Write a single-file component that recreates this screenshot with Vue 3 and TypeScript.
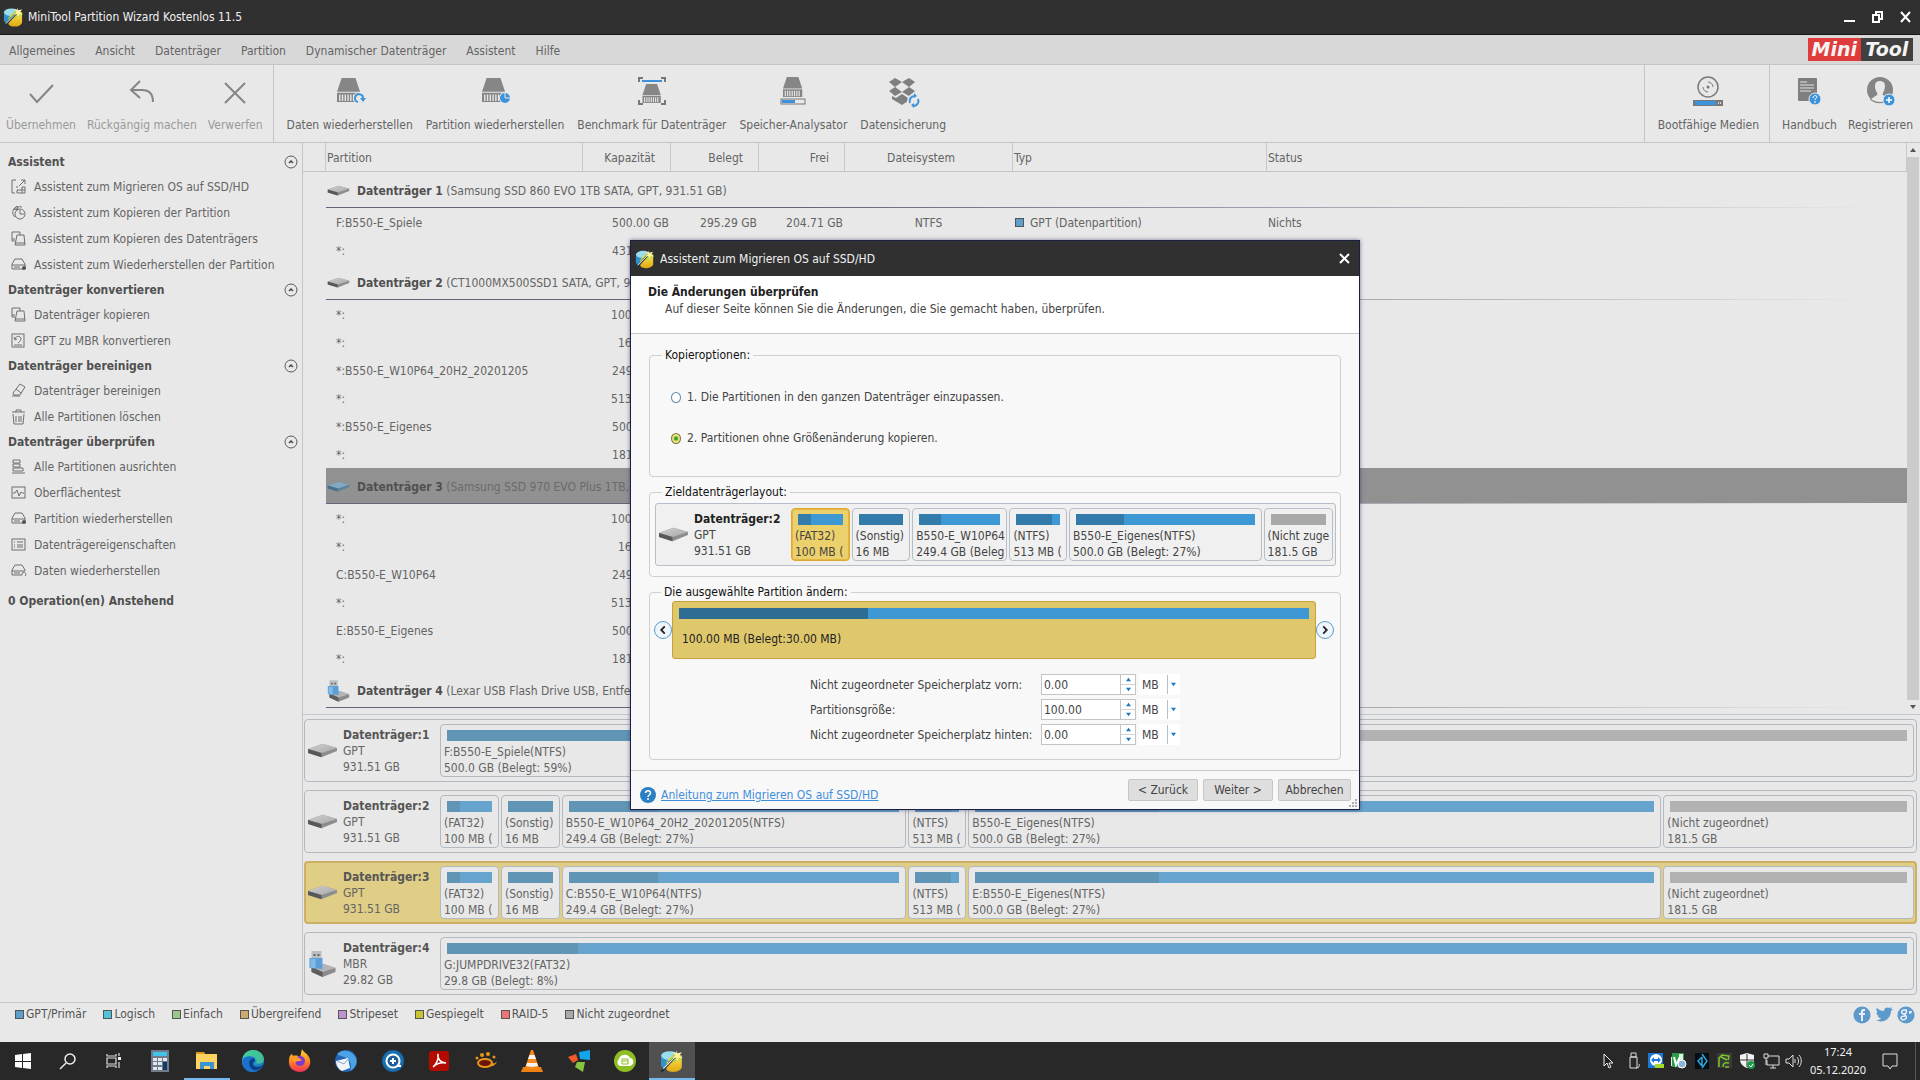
<script setup lang="ts">
import { ref } from 'vue'

interface ToolItem { label: string; icon: string; off?: boolean }
interface Part { name: string; info: string; size: number; used: number; free?: boolean; active?: boolean }
interface Disk { title: string; scheme: string; total: string; icon: string; selected?: boolean; parts: Part[] }
interface Row { name: string; cap: string; used?: string; free?: string; fs?: string; type?: string; status?: string }
interface Group { title: string; detail: string; icon: string; selected?: boolean; rows: Row[] }

const menus = ['Allgemeines', 'Ansicht', 'Datenträger', 'Partition', 'Dynamischer Datenträger', 'Assistent', 'Hilfe']

const pendingTools: ToolItem[] = [
  { label: 'Übernehmen', icon: 't-check', off: true },
  { label: 'Rückgängig machen', icon: 't-undo', off: true },
  { label: 'Verwerfen', icon: 't-cross', off: true },
]
const mainTools: ToolItem[] = [
  { label: 'Daten wiederherstellen', icon: 't-recover' },
  { label: 'Partition wiederherstellen', icon: 't-part' },
  { label: 'Benchmark für Datenträger', icon: 't-bench' },
  { label: 'Speicher-Analysator', icon: 't-space' },
  { label: 'Datensicherung', icon: 't-backup' },
]
const mediaTools: ToolItem[] = [{ label: 'Bootfähige Medien', icon: 't-media' }]
const helpTools: ToolItem[] = [
  { label: 'Handbuch', icon: 't-manual' },
  { label: 'Registrieren', icon: 't-user' },
]

const sections = [
  { title: 'Assistent', items: [
    { icon: 's-migrate', label: 'Assistent zum Migrieren OS auf SSD/HD' },
    { icon: 's-pie', label: 'Assistent zum Kopieren der Partition' },
    { icon: 's-copy', label: 'Assistent zum Kopieren des Datenträgers' },
    { icon: 's-drive', label: 'Assistent zum Wiederherstellen der Partition' },
  ] },
  { title: 'Datenträger konvertieren', items: [
    { icon: 's-copy', label: 'Datenträger kopieren' },
    { icon: 's-convert', label: 'GPT zu MBR konvertieren' },
  ] },
  { title: 'Datenträger bereinigen', items: [
    { icon: 's-erase', label: 'Datenträger bereinigen' },
    { icon: 's-trash', label: 'Alle Partitionen löschen' },
  ] },
  { title: 'Datenträger überprüfen', items: [
    { icon: 's-align', label: 'Alle Partitionen ausrichten' },
    { icon: 's-surface', label: 'Oberflächentest' },
    { icon: 's-drive', label: 'Partition wiederherstellen' },
    { icon: 's-list', label: 'Datenträgereigenschaften' },
    { icon: 's-drive2', label: 'Daten wiederherstellen' },
  ] },
]

const groups: Group[] = [
  { title: 'Datenträger 1', detail: '(Samsung SSD 860 EVO 1TB SATA, GPT, 931.51 GB)', icon: 'disk', rows: [
    { name: 'F:B550-E_Spiele', cap: '500.00 GB', used: '295.29 GB', free: '204.71 GB', fs: 'NTFS', type: 'GPT (Datenpartition)', status: 'Nichts' },
    { name: '*:', cap: '431.51 GB' },
  ] },
  { title: 'Datenträger 2', detail: '(CT1000MX500SSD1 SATA, GPT, 931.51 GB)', icon: 'disk', rows: [
    { name: '*:', cap: '100.00 MB' },
    { name: '*:', cap: '16.00 MB' },
    { name: '*:B550-E_W10P64_20H2_20201205', cap: '249.40 GB' },
    { name: '*:', cap: '513.00 MB' },
    { name: '*:B550-E_Eigenes', cap: '500.00 GB' },
    { name: '*:', cap: '181.50 GB' },
  ] },
  { title: 'Datenträger 3', detail: '(Samsung SSD 970 EVO Plus 1TB, GPT, 931.51 GB)', icon: 'disk-blue', selected: true, rows: [
    { name: '*:', cap: '100.00 MB' },
    { name: '*:', cap: '16.00 MB' },
    { name: 'C:B550-E_W10P64', cap: '249.40 GB' },
    { name: '*:', cap: '513.00 MB' },
    { name: 'E:B550-E_Eigenes', cap: '500.00 GB' },
    { name: '*:', cap: '181.50 GB' },
  ] },
  { title: 'Datenträger 4', detail: '(Lexar USB Flash Drive USB, Entfernbar)', icon: 'usb', rows: [] },
]

const layout = (os: string, data: string): Part[] => [
  { name: '(FAT32)', info: '100 MB (', size: 59, used: 30 },
  { name: '(Sonstig)', info: '16 MB', size: 59, used: 100 },
  { name: os, info: '249.4 GB (Belegt: 27%)', size: 345, used: 27 },
  { name: '(NTFS)', info: '513 MB (', size: 58, used: 82 },
  { name: data, info: '500.0 GB (Belegt: 27%)', size: 694, used: 27 },
  { name: '(Nicht zugeordnet)', info: '181.5 GB', size: 251, used: 0, free: true },
]

const disks: Disk[] = [
  { title: 'Datenträger:1', scheme: 'GPT', total: '931.51 GB', icon: 'disk', parts: [
    { name: 'F:B550-E_Spiele(NTFS)', info: '500.0 GB (Belegt: 59%)', size: 791, used: 59 },
    { name: '(Nicht zugeordnet)', info: '431.5 GB', size: 681, used: 0, free: true },
  ] },
  { title: 'Datenträger:2', scheme: 'GPT', total: '931.51 GB', icon: 'disk', parts: layout('B550-E_W10P64_20H2_20201205(NTFS)', 'B550-E_Eigenes(NTFS)') },
  { title: 'Datenträger:3', scheme: 'GPT', total: '931.51 GB', icon: 'disk', selected: true, parts: layout('C:B550-E_W10P64(NTFS)', 'E:B550-E_Eigenes(NTFS)') },
  { title: 'Datenträger:4', scheme: 'MBR', total: '29.82 GB', icon: 'usb', parts: [
    { name: 'G:JUMPDRIVE32(FAT32)', info: '29.8 GB (Belegt: 8%)', size: 1474, used: 9 },
  ] },
]

const targetParts: Part[] = [
  { name: '(FAT32)', info: '100 MB (', size: 59, used: 30, active: true },
  { name: '(Sonstig)', info: '16 MB', size: 59, used: 100 },
  { name: 'B550-E_W10P64', info: '249.4 GB (Beleg', size: 96, used: 27 },
  { name: '(NTFS)', info: '513 MB (', size: 58, used: 82 },
  { name: 'B550-E_Eigenes(NTFS)', info: '500.0 GB (Belegt: 27%)', size: 194, used: 27 },
  { name: '(Nicht zuge', info: '181.5 GB', size: 70, used: 0, free: true },
]

// Each part carries a one-pixel border on both sides that flex growth does not cover.
const grow = (p: Part) => ({ flexGrow: p.size - 2 })

const copyMode = ref('2')
const copyModes = [
  { value: '1', label: '1. Die Partitionen in den ganzen Datenträger einzupassen.' },
  { value: '2', label: '2. Partitionen ohne Größenänderung kopieren.' },
]
const sizes = ref([
  { id: 'before', label: 'Nicht zugeordneter Speicherplatz vorn:', value: '0.00' },
  { id: 'size', label: 'Partitionsgröße:', value: '100.00' },
  { id: 'after', label: 'Nicht zugeordneter Speicherplatz hinten:', value: '0.00' },
])

const legend = [
  { label: 'GPT/Primär', color: '#5f9fcc' },
  { label: 'Logisch', color: '#4fc3dc' },
  { label: 'Einfach', color: '#9cc690' },
  { label: 'Übergreifend', color: '#cda96f' },
  { label: 'Stripeset', color: '#bd93d4' },
  { label: 'Gespiegelt', color: '#c6c52f' },
  { label: 'RAID-5', color: '#ea7575' },
  { label: 'Nicht zugeordnet', color: '#a9a9a9' },
]

const apps = [
  { id: 'a-calc', name: 'Rechner' },
  { id: 'a-folder', name: 'Explorer', open: true },
  { id: 'a-edge', name: 'Edge' },
  { id: 'a-firefox', name: 'Firefox' },
  { id: 'a-bird', name: 'Thunderbird' },
  { id: 'a-zoom', name: 'Suche' },
  { id: 'a-pdf', name: 'Acrobat' },
  { id: 'a-paw', name: 'IrfanView' },
  { id: 'a-vlc', name: 'VLC' },
  { id: 'a-wind', name: 'Cleaner' },
  { id: 'a-green', name: 'Download' },
  { id: 'wizard', name: 'Partition Wizard', open: true, active: true },
]
const tray = ['y-usb', 'y-tv', 'y-vm', 'y-diamond', 'y-green', 'y-shield', 'y-net', 'y-vol']
</script>

<template>
  <div class="desktop">
    <svg class="defs" aria-hidden="true">
      <defs>
        <linearGradient id="gTop" x1="0" y1="0" x2="1" y2="1"><stop offset="0" stop-color="#cfcfcf" /><stop offset="1" stop-color="#a9a9a9" /></linearGradient>
        <linearGradient id="gEdge" x1="0" y1="0" x2="1" y2="1"><stop offset="0" stop-color="#38d0c0" /><stop offset="1" stop-color="#1265c8" /></linearGradient>
        <linearGradient id="gFox" x1="0" y1="0" x2="0" y2="1"><stop offset="0" stop-color="#ffd93b" /><stop offset=".5" stop-color="#ff8a1e" /><stop offset="1" stop-color="#f0305a" /></linearGradient>
        <linearGradient id="gGold" x1="0" y1="0" x2="0" y2="1"><stop offset="0" stop-color="#f6e14c" /><stop offset="1" stop-color="#e0a812" /></linearGradient>
        <radialGradient id="gBlue"><stop offset="0" stop-color="#3aa0dc" /><stop offset="1" stop-color="#1464a4" /></radialGradient>
      </defs>
      <symbol id="wizard" viewBox="0 0 22 22">
        <path d="M1 7v7c0 3 3 4.500 7 4.500L11 9z" fill="#2f93c8" /><ellipse cx="9" cy="6" rx="8" ry="4" fill="#9adcf2" />
        <path d="M6 11c4 3 10 0 14-4v10c-2 5-11 5-14 2z" fill="url(#gGold)" /><path d="M7 10l5-5 8 1v3c-4 3-9 4-13 2z" fill="#c5d94a" />
        <path d="M1 21L15 6" stroke="#20303a" stroke-width="2" /><path d="M3 18L15 6" stroke="#f0f0f0" stroke-width="1" />
        <path d="M15 1l1 3 4-1-2 3 3 2-4 0-1 3-1-3-4 0 3-2-2-3 3 1z" fill="#fff2a0" />
      </symbol>
      <symbol id="disk" viewBox="0 0 30 14">
        <path d="M1 5L15 0l14 4v3L14 13 1 9z" fill="#8d8d8d" /><path d="M1 5L15 0l14 4-15 5z" fill="url(#gTop)" /><path d="M1 5l13 4v4L1 9z" fill="#585858" />
      </symbol>
      <symbol id="disk-blue" viewBox="0 0 30 14">
        <path d="M1 5L15 0l14 4v3L14 13 1 9z" fill="#5d8199" /><path d="M1 5L15 0l14 4-15 5z" fill="#83a8c4" /><path d="M1 5l13 4v4L1 9z" fill="#47708c" />
      </symbol>
      <symbol id="usb" viewBox="0 0 28 26">
        <path d="M3 16l12-3 12 4v4l-13 5L3 21z" fill="#8b8b8b" /><path d="M3 16l12-3 12 4-13 4z" fill="#b5b5b5" /><path d="M3 16l11 5v5L3 21z" fill="#5d5d5d" />
        <rect x="3" y="0" width="10" height="8" fill="#b9bec2" /><rect x="5" y="3" width="2" height="2" fill="#666" /><rect x="9" y="3" width="2" height="2" fill="#666" />
        <path d="M1 7h13v11l-13-1z" fill="#5c9fd8" /><path d="M2 8h5v9H2z" fill="#83bbe8" />
      </symbol>
      <symbol id="drv" viewBox="0 0 28 26"><path d="M6 0h15l5 15H1z" fill="#868686" /><path d="M1 16h25v10H1z" fill="#858585" /><path d="M4 18v7M7 18v7M10 18v7M13 18v7M16 18v7M19 18v7M22 18v7" stroke="#e8e8e8" stroke-width="1.500" /></symbol>

      <symbol id="t-check" viewBox="0 0 36 36"><path d="M7 19l7 8L30 10" fill="none" stroke="#858585" stroke-width="2" /></symbol>
      <symbol id="t-undo" viewBox="0 0 36 36"><path d="M16 6l-9 9 9 8M7 15h11c8 0 11 4 11 12" fill="none" stroke="#858585" stroke-width="2" /></symbol>
      <symbol id="t-cross" viewBox="0 0 36 36"><path d="M8 8l20 20M28 8L8 28" stroke="#858585" stroke-width="2" /></symbol>
      <symbol id="t-recover" viewBox="0 0 36 36"><use href="#drv" x="4" y="3" width="26" height="24" /><circle cx="27" cy="23" r="6" fill="#e8e8e8" /><path d="M26 27a4 4 0 1 1 5-4" fill="none" stroke="#3c93dc" stroke-width="2" /><path d="M28 23h6l-3 4z" fill="#3c93dc" /></symbol>
      <symbol id="t-part" viewBox="0 0 36 36"><use href="#drv" x="4" y="3" width="26" height="24" /><circle cx="28" cy="23" r="6" fill="#e8e8e8" /><circle cx="28" cy="23" r="5" fill="#3c93dc" /><path d="M28 18v5h5" fill="none" stroke="#e8e8e8" /></symbol>
      <symbol id="t-bench" viewBox="0 0 36 36"><use href="#drv" x="7" y="9" width="22" height="19" /><path d="M5 7V3h4M27 3h4v4M5 25v4h4M31 25v4h-4" fill="none" stroke="#777" stroke-width="2" /><path d="M8 6h20" stroke="#3c93dc" stroke-width="2" /></symbol>
      <symbol id="t-space" viewBox="0 0 36 36"><use href="#drv" x="5" y="2" width="26" height="20" /><rect x="6" y="24" width="24" height="5" fill="#e8e8e8" stroke="#777" /><path d="M7 25h13v3H7z" fill="#3c93dc" /></symbol>
      <symbol id="t-backup" viewBox="0 0 36 36"><path d="M10 3l7 4-7 5-6-5zM24 3l6 4-6 5-7-5zM10 12l7 5-7 4-6-5zM24 12l6 4-6 5-7-4zM7 21l4 2 6-4 6 4v3l-6 4-10-6z" fill="#7f7f7f" /><circle cx="29" cy="26" r="7" fill="#e8e8e8" /><path d="M25 28a5 5 0 0 1 5-7M33 24a5 5 0 0 1-5 7" fill="none" stroke="#3c93dc" stroke-width="2" /><path d="M29 18l3 3-3 2zM29 33l-3-3 3-2z" fill="#3c93dc" /></symbol>
      <symbol id="t-media" viewBox="0 0 36 36"><circle cx="18" cy="12" r="10" fill="none" stroke="#7b7b7b" stroke-width="1.500" /><circle cx="18" cy="12" r="1.500" fill="#777" /><path d="M18 7a5 5 0 0 1 5 5M18 17a5 5 0 0 1-5-5" fill="none" stroke="#777" /><rect x="3" y="25" width="30" height="6" fill="#777" /><rect x="5" y="26" width="21" height="4" fill="#3c93dc" /><path d="M28 27h1v2h-1zM30 27h1v2h-1z" fill="#ddd" /></symbol>
      <symbol id="t-manual" viewBox="0 0 36 36"><rect x="7" y="3" width="19" height="23" rx="1" fill="#7f7f7f" /><path d="M9 7h7M9 10h14M9 13h14M9 16h11" stroke="#e4e4e4" /><circle cx="24" cy="24" r="6" fill="#3c93dc" stroke="#e8e8e8" /><path d="M22 23c0-3 4-3 4-1 0 1-2 1-2 3M24 26v2" fill="none" stroke="#fff" /></symbol>
      <symbol id="t-user" viewBox="0 0 36 36"><circle cx="18" cy="15" r="13" fill="#858585" /><path d="M9 24l6-4c1-1 0-2-1-4-2-6-1-10 4-10s6 4 4 10c-1 2-2 3-1 4l6 4c-5 4-13 4-18 0z" fill="#e8e8e8" /><path d="M8 24c5 5 14 5 19 0" fill="none" stroke="#858585" /><circle cx="27" cy="25" r="6" fill="#3c93dc" stroke="#e8e8e8" /><path d="M24 25h6M27 22v6" stroke="#fff" stroke-width="1.500" /></symbol>

      <symbol id="s-migrate" viewBox="0 0 16 16"><path d="M5 1H1v13h3M10 1h4v4M14 1L8 7M5 8h2M6 14h8V8h-3v6M6 11h8M6 11v3" fill="none" stroke="#6f6f6f" /></symbol>
      <symbol id="s-pie" viewBox="0 0 16 16"><path d="M5 2a6 6 0 0 0-1 10M4 5a6 6 0 0 1 7-3" fill="none" stroke="#6f6f6f" /><circle cx="9" cy="9" r="5" fill="none" stroke="#6f6f6f" /><path d="M9 5v4h4M3 4l3-3 1 4z" fill="none" stroke="#6f6f6f" /></symbol>
      <symbol id="s-copy" viewBox="0 0 16 16"><path d="M4 10H1V1h8v3M1 8h3M6 4h7l1 10H4zM4 12h10" fill="none" stroke="#6f6f6f" /></symbol>
      <symbol id="s-drive" viewBox="0 0 16 16"><path d="M1 7l3-5h7l3 5v1H1zM1 8v4h13V8M3 10h6" fill="none" stroke="#6f6f6f" /><circle cx="13" cy="11" r="2" fill="#555" /></symbol>
      <symbol id="s-drive2" viewBox="0 0 16 16"><path d="M1 7l3-5h7l3 5v1H1zM1 8v4h10M3 10h6M11 12a2 2 0 1 1 3 1" fill="none" stroke="#6f6f6f" /></symbol>
      <symbol id="s-convert" viewBox="0 0 16 16"><rect x="1" y="1" width="12" height="13" fill="none" stroke="#6f6f6f" /><path d="M4 6c1-4 6-3 6 0 0 2-2 3-3 4M3 4l1 3 2-1M3 12h8" fill="none" stroke="#6f6f6f" /></symbol>
      <symbol id="s-erase" viewBox="0 0 16 16"><path d="M9 1l5 3-5 8H3l-1-2zM5 6l5 4M1 13h8" fill="none" stroke="#6f6f6f" /></symbol>
      <symbol id="s-trash" viewBox="0 0 16 16"><path d="M1 3h13M5 3V1h5v2M2 5l1 10h9l1-10M5 7v6M8 7v6M10 7v6" fill="none" stroke="#6f6f6f" /></symbol>
      <symbol id="s-align" viewBox="0 0 16 16"><path d="M2 1h7v3H2zM2 5h7v3H2zM2 9h10v3H2zM1 14h13" fill="none" stroke="#6f6f6f" /></symbol>
      <symbol id="s-surface" viewBox="0 0 16 16"><rect x="1" y="2" width="13" height="11" fill="none" stroke="#6f6f6f" /><path d="M2 8h2l2-3 2 6 2-4 1 1h2" fill="none" stroke="#6f6f6f" /></symbol>
      <symbol id="s-list" viewBox="0 0 16 16"><rect x="1" y="2" width="13" height="11" fill="none" stroke="#6f6f6f" /><path d="M3 5h1M3 8h1M3 10h1M6 5h6M6 8h6M6 10h6" stroke="#6f6f6f" /></symbol>
      <symbol id="chev" viewBox="0 0 14 14"><circle cx="7" cy="7" r="6" fill="none" stroke="#5a5a5a" /><path d="M5 8l2-2 2 2" fill="none" stroke="#444" stroke-width="1.500" /></symbol>

      <symbol id="a-calc" viewBox="0 0 24 24"><rect x="3" y="1" width="18" height="22" fill="#6f7d8b" /><rect x="5" y="3" width="14" height="4" fill="#45c2ea" /><path d="M5 9h4v3H5zM10 9h4v3h-4zM15 9h4v3h-4zM5 13h4v3H5zM10 13h4v3h-4zM5 18h4v3H5zM10 18h4v3h-4z" fill="#e4e8ec" /><path d="M15 13h4v8h-4z" fill="#123a68" /></symbol>
      <symbol id="a-folder" viewBox="0 0 24 24"><path d="M1 3h8l2 3H1z" fill="#d99a22" /><path d="M1 5h21v15H1z" fill="#fbd35e" /><path d="M5 20v-7h14v7h-4v-3H9v3z" fill="#3a93d2" /></symbol>
      <symbol id="a-edge" viewBox="0 0 24 24"><circle cx="12" cy="12" r="11" fill="url(#gEdge)" /><path d="M1 12C3 6 14 5 14 11c0 2-2 2-2 4 0 3 6 4 10 1-2 4-6 7-10 7C5 23 1 18 1 12z" fill="#1a72cf" /><path d="M8 14c0-4 5-6 6-3 0 2-2 2-2 4 0 3 6 4 10 1-2 4-6 6-9 5-3-1-5-4-5-7z" fill="#0d3f86" /><path d="M12 1c7 0 11 5 11 9s-5 6-8 4c2-3-1-9-13-6C4 3 8 1 12 1z" fill="#49cf8c" opacity=".75" /></symbol>
      <symbol id="a-firefox" viewBox="0 0 24 24"><path d="M14 0c1 3 5 4 7 8 4 8-2 15-9 15S0 18 1 11c0-3 1-5 3-6l1 2c3-1 6 0 7 1 1-2 1-5 2-8z" fill="url(#gFox)" /><circle cx="12" cy="12" r="5" fill="#7a3ad0" /><path d="M5 8c4-1 6 1 9 3-2 2-6 0-7 3-2-1-3-4-2-6z" fill="#ff9a2a" /></symbol>
      <symbol id="a-bird" viewBox="0 0 24 24"><circle cx="12" cy="12" r="11" fill="#2463b5" /><path d="M3 5c6-6 16-3 19 4 2 6-2 11-6 13 2-6 1-10-4-13-3-2-7-2-9-4z" fill="#4ba3e6" /><path d="M2 12l12-3 2 10-8 3c-4-2-6-6-6-10z" fill="#f2f5fa" /><path d="M3 12l7 3 4-5" fill="none" stroke="#8aa5c8" /></symbol>
      <symbol id="a-zoom" viewBox="0 0 24 24"><circle cx="12" cy="12" r="11" fill="url(#gBlue)" /><circle cx="12" cy="12" r="6.500" fill="#1c5f9a" stroke="#fff" stroke-width="2" /><path d="M9 12h6M12 9v6M16 17h4" stroke="#fff" stroke-width="2" /></symbol>
      <symbol id="a-pdf" viewBox="0 0 24 24"><rect x="2" y="2" width="20" height="20" rx="3" fill="#b30b00" /><path d="M6 18c3-2 6-8 5-13-1 5 3 9 8 9-5-1-10 1-13 4z" fill="none" stroke="#fff" stroke-width="1.500" /></symbol>
      <symbol id="a-paw" viewBox="0 0 24 24"><ellipse cx="11" cy="14" rx="7" ry="4" fill="#6b1408" stroke="#e8951c" stroke-width="2" /><path d="M17 14c3 1 5 0 6-2-1 4-4 6-8 5" fill="#e8951c" /><circle cx="3" cy="9" r="1.500" fill="#e8951c" /><circle cx="8" cy="6" r="2" fill="#e8951c" /><circle cx="14" cy="5" r="2" fill="#e8951c" /><circle cx="20" cy="8" r="1.500" fill="#e8951c" /></symbol>
      <symbol id="a-vlc" viewBox="0 0 24 24"><path d="M3 18h18l2 5H1z" fill="#f08010" /><path d="M11 1h2l6 18c-3 2-11 2-14 0z" fill="#f58a1a" /><path d="M9.500 6h5l1.500 4H8zM7 14h10l1 3c-3 1-9 1-12 0z" fill="#f4f4f4" /></symbol>
      <symbol id="a-wind" viewBox="0 0 24 24"><path d="M12 3l11-2v10l-10-1z" fill="#12a5ea" /><path d="M1 8l8-3 2 6-5 3z" fill="#ee5a2a" /><path d="M10 13l8 0-2 10-8-5z" fill="#86c440" /></symbol>
      <symbol id="a-green" viewBox="0 0 24 24"><circle cx="12" cy="12" r="11" fill="#8fbe22" /><path d="M7 17a4 4 0 0 1-1-7c1-5 9-6 11-1 4 0 5 7 0 8z" fill="#fff" /><path d="M9 10h6v5H9zM9 12h6" fill="none" stroke="#8fbe22" /></symbol>

      <symbol id="y-usb" viewBox="0 0 18 18"><path d="M7 1h5v4H7zM6 5h7v11H6zM12 16c3 0 4-2 3-4" fill="none" stroke="#ddd" /></symbol>
      <symbol id="y-tv" viewBox="0 0 18 18"><rect x="1" y="1" width="15" height="15" fill="#1a78d6" /><circle cx="9" cy="8" r="6" fill="#fff" /><path d="M4 8l3-3v2h4V5l3 3-3 3V9H7v2z" fill="#1a78d6" /><path d="M8 12h9v4H8z" fill="#a4d82c" /></symbol>
      <symbol id="y-vm" viewBox="0 0 18 18"><path d="M1 5l12-4v15l-12-2z" fill="#dff0df" /><path d="M2 1h12v14H2z" fill="#2d9c48" /><path d="M9 2h4v7H9z" fill="#dff0df" /><path d="M4 5l2 8 4-8" fill="none" stroke="#fff" stroke-width="2" /><circle cx="12" cy="12" r="4" fill="#8cb8dc" stroke="#fff" /></symbol>
      <symbol id="y-diamond" viewBox="0 0 18 18"><rect x="2" y="1" width="14" height="16" fill="#050c12" /><path d="M9 2l5 7-5 7M9 5l-4 4 4 5M9 5v9" fill="none" stroke="#2ba8dc" stroke-width="1.500" /></symbol>
      <symbol id="y-green" viewBox="0 0 18 18"><rect x="1" y="1" width="15" height="15" fill="#3a3a3a" /><path d="M3 15V6l3-3 7 1-1 4M7 15c0-4 2-5 6-4M5 5l6 3M9 15h4" fill="none" stroke="#78c828" stroke-width="1.500" /></symbol>
      <symbol id="y-shield" viewBox="0 0 18 18"><path d="M8 1l7 2v5c0 4-4 7-7 8-3-1-7-4-7-8V3z" fill="#f2f2f2" /><path d="M8 2v13M1 8h14" stroke="#333" /><circle cx="12" cy="13" r="4" fill="#1e9c48" /><path d="M10 13l2 2 2-3" fill="none" stroke="#fff" /></symbol>
      <symbol id="y-net" viewBox="0 0 18 18"><path d="M6 4h11v9H5V8M11 13v3M8 16h6M2 2h4v4H2zM4 6v7" fill="none" stroke="#ddd" /></symbol>
      <symbol id="y-vol" viewBox="0 0 18 18"><path d="M1 7h3l4-4v12l-4-4H1zM10 7v4M12 5c2 2 2 6 0 8M14 3c3 3 3 9 0 12" fill="none" stroke="#ddd" /></symbol>
    </svg>

    <header class="titlebar">
      <svg class="app-icon"><use href="#wizard" /></svg>
      <span class="app-title">MiniTool Partition Wizard Kostenlos 11.5</span>
      <button class="win-btn" aria-label="Minimieren"><svg viewBox="0 0 14 14"><path d="M2 11h11" stroke="#fff" stroke-width="2" /></svg></button>
      <button class="win-btn" aria-label="Wiederherstellen"><svg viewBox="0 0 14 14"><path d="M3 5h6v7H3zM6 5V2h6v7H9" fill="none" stroke="#fff" stroke-width="2" /></svg></button>
      <button class="win-btn" aria-label="Schließen"><svg viewBox="0 0 14 14"><path d="M3 2l9 10M12 2L3 12" stroke="#fff" stroke-width="2" /></svg></button>
    </header>

    <nav class="menubar">
      <button v-for="m in menus" :key="m" class="menu">{{ m }}</button>
      <span class="logo"><span class="logo-a">Mini</span><span class="logo-b">Tool</span></span>
    </nav>

    <div class="toolbar">
      <div class="tools tools-off">
        <button v-for="t in pendingTools" :key="t.label" class="tool off"><svg class="tool-icon"><use :href="'#' + t.icon" /></svg>{{ t.label }}</button>
      </div>
      <div class="tools tools-main">
        <button v-for="t in mainTools" :key="t.label" class="tool"><svg class="tool-icon"><use :href="'#' + t.icon" /></svg>{{ t.label }}</button>
      </div>
      <div class="tools tools-media">
        <button v-for="t in mediaTools" :key="t.label" class="tool"><svg class="tool-icon"><use :href="'#' + t.icon" /></svg>{{ t.label }}</button>
      </div>
      <div class="tools tools-help">
        <button v-for="t in helpTools" :key="t.label" class="tool"><svg class="tool-icon"><use :href="'#' + t.icon" /></svg>{{ t.label }}</button>
      </div>
    </div>

    <div class="workspace">
      <aside class="sidebar">
        <section v-for="s in sections" :key="s.title">
          <h2 class="side-head">{{ s.title }}<svg class="chev"><use href="#chev" /></svg></h2>
          <button v-for="i in s.items" :key="i.label" class="side-item"><svg class="side-icon"><use :href="'#' + i.icon" /></svg>{{ i.label }}</button>
        </section>
        <p class="pending">0 Operation(en) Anstehend</p>
      </aside>

      <main class="main">
        <div class="list">
          <table class="grid">
            <colgroup>
              <col class="c-gap"><col class="c-name"><col class="c-num"><col class="c-num"><col class="c-free"><col class="c-fs"><col class="c-type"><col>
            </colgroup>
            <thead>
              <tr><th></th><th>Partition</th><th class="num">Kapazität</th><th class="num">Belegt</th><th class="num">Frei</th><th class="mid">Dateisystem</th><th>Typ</th><th>Status</th></tr>
            </thead>
            <tbody v-for="g in groups" :key="g.title">
              <tr class="group" :class="{ selected: g.selected }">
                <td></td>
                <th colspan="7"><div class="group-line"><svg class="group-icon"><use :href="'#' + g.icon" /></svg><span><b>{{ g.title }}</b> {{ g.detail }}</span></div></th>
              </tr>
              <tr v-for="(r, n) in g.rows" :key="n" class="row">
                <td></td><td class="name">{{ r.name }}</td><td class="num">{{ r.cap }}</td><td class="num">{{ r.used }}</td><td class="num">{{ r.free }}</td>
                <td class="mid">{{ r.fs }}</td><td><span v-if="r.type" class="swatch type-dot"></span>{{ r.type }}</td><td>{{ r.status }}</td>
              </tr>
            </tbody>
          </table>
          <div class="scroll">
            <svg class="scroll-arrow" viewBox="0 0 12 12"><path d="M3 8l3-4 3 4z" fill="#555" /></svg>
            <div class="thumb"></div>
            <svg class="scroll-arrow" viewBox="0 0 12 12"><path d="M3 4l3 4 3-4z" fill="#555" /></svg>
          </div>
        </div>

        <div class="maps">
          <div v-for="d in disks" :key="d.title" class="disk" :class="{ selected: d.selected }">
            <svg class="disk-icon"><use :href="'#' + d.icon" /></svg>
            <div class="disk-text"><b>{{ d.title }}</b><span>{{ d.scheme }}</span><span>{{ d.total }}</span></div>
            <div class="parts">
              <div v-for="(p, n) in d.parts" :key="n" class="part" :style="grow(p)">
                <div class="bar" :class="{ free: p.free }"><div class="used" :style="{ width: p.used + '%' }"></div></div>
                <div class="part-text"><span>{{ p.name }}</span><span>{{ p.info }}</span></div>
              </div>
            </div>
          </div>
        </div>
      </main>
    </div>

    <footer class="legend">
      <span v-for="l in legend" :key="l.label" class="legend-item"><span class="swatch" :style="{ background: l.color }"></span>{{ l.label }}</span>
      <span class="social">
        <svg viewBox="0 0 18 18"><circle cx="9" cy="9" r="8.500" fill="#5b9acb" /><path d="M10 15V9h2V7h-2V6c0-1 1-1 2-1V3c-3 0-4 0-4 3v1H6v2h2v6z" fill="#eef" /></svg>
        <svg viewBox="0 0 18 18"><path d="M1 14c2 0 4 0 5-2-2 0-3-1-3-2h1C2 9 1 8 2 6h1C1 5 1 3 2 2c2 2 4 3 7 3 0-4 4-4 6-3l2-1-1 2h2l-2 2c0 8-8 13-15 9z" fill="#5b9acb" /></svg>
        <svg viewBox="0 0 18 18"><circle cx="9" cy="9" r="8.500" fill="#5b9acb" /><path d="M10 4H7c-3 0-3 4 0 4 3 0 3-4 1-4M7 8l2 2c2 4-5 5-5 2 0-2 3-2 4-2M12 6h3M13 5v3" fill="none" stroke="#eef" stroke-width="1.500" /></svg>
      </span>
    </footer>

    <div class="taskbar">
      <button class="sys" aria-label="Start"><svg viewBox="0 0 18 18"><path d="M1 3l7-1v7H1zM9 2l8-1v8H9zM1 10h7v6l-7-1zM9 10h8v7l-8-1z" fill="#fff" /></svg></button>
      <button class="sys" aria-label="Suchen"><svg viewBox="0 0 18 18"><circle cx="11" cy="7" r="5" fill="none" stroke="#eee" stroke-width="1.500" /><path d="M7 11l-6 6" stroke="#eee" stroke-width="1.500" /></svg></button>
      <button class="sys" aria-label="Taskansicht"><svg viewBox="0 0 18 18"><path d="M3 2v2h9V2M3 6h9v6H3zM3 16v-2h9v2M15 1v3M15 10v6" fill="none" stroke="#ddd" stroke-width="1.200" /><path d="M14 5h3v3h-3z" fill="#eee" /></svg></button>
      <div class="apps">
        <button v-for="a in apps" :key="a.id" class="app" :class="{ open: a.open, active: a.active }" :aria-label="a.name"><svg><use :href="'#' + a.id" /></svg></button>
      </div>
      <svg class="cursor" viewBox="0 0 12 18"><path d="M2 2v12l3-3 2 5 2-1-2-4h4z" fill="#222" stroke="#eee" /></svg>
      <div class="tray"><svg v-for="t in tray" :key="t"><use :href="'#' + t" /></svg></div>
      <div class="clock"><span>17:24</span><span>05.12.2020</span></div>
      <button class="notify" aria-label="Benachrichtigungen"><svg viewBox="0 0 18 18"><path d="M2 2h14v12h-5l-2 3-2-3H2z" fill="none" stroke="#ddd" /></svg></button>
      <span class="peek"></span>
    </div>

    <div class="dialog" role="dialog" aria-labelledby="dlg-title">
      <header class="dlg-bar">
        <svg class="dlg-icon"><use href="#wizard" /></svg>
        <span id="dlg-title" class="dlg-title">Assistent zum Migrieren OS auf SSD/HD</span>
        <button class="win-btn" aria-label="Schließen"><svg viewBox="0 0 14 14"><path d="M2 2l9 9M11 2l-9 9" stroke="#fff" stroke-width="2" /></svg></button>
      </header>
      <div class="dlg-head">
        <h1>Die Änderungen überprüfen</h1>
        <p>Auf dieser Seite können Sie die Änderungen, die Sie gemacht haben, überprüfen.</p>
      </div>
      <div class="dlg-body">
        <fieldset class="box options">
          <legend>Kopieroptionen:</legend>
          <label v-for="c in copyModes" :key="c.value" class="radio"><input v-model="copyMode" type="radio" name="copy" :value="c.value">{{ c.label }}</label>
        </fieldset>
        <fieldset class="box target">
          <legend>Zieldatenträgerlayout:</legend>
          <div class="disk">
            <svg class="disk-icon"><use href="#disk" /></svg>
            <div class="disk-text"><b>Datenträger:2</b><span>GPT</span><span>931.51 GB</span></div>
            <div class="parts">
              <div v-for="(p, n) in targetParts" :key="n" class="part" :class="{ active: p.active }" :style="grow(p)">
                <div class="bar" :class="{ free: p.free }"><div class="used" :style="{ width: p.used + '%' }"></div></div>
                <div class="part-text"><span>{{ p.name }}</span><span>{{ p.info }}</span></div>
              </div>
            </div>
          </div>
        </fieldset>
        <fieldset class="box resize">
          <legend>Die ausgewählte Partition ändern:</legend>
          <div class="slider">
            <button class="arrow" aria-label="Zurück"><svg viewBox="0 0 18 18"><path d="M11 5L7 9l4 4" fill="none" stroke="#222" stroke-width="2" /></svg></button>
            <div class="chunk">
              <div class="bar"><div class="used" :style="{ width: '30%' }"></div></div>
              <span>100.00 MB (Belegt:30.00 MB)</span>
            </div>
            <button class="arrow" aria-label="Vor"><svg viewBox="0 0 18 18"><path d="M7 5l4 4-4 4" fill="none" stroke="#222" stroke-width="2" /></svg></button>
          </div>
          <div class="fields">
            <div v-for="s in sizes" :key="s.id" class="field">
              <label :for="s.id">{{ s.label }}</label>
              <span class="spin">
                <input :id="s.id" v-model="s.value" type="text">
                <span class="steps">
                  <button aria-label="Mehr"><svg viewBox="0 0 8 6"><path d="M1 5l3-4 3 4z" fill="#1b78c2" /></svg></button>
                  <button aria-label="Weniger"><svg viewBox="0 0 8 6"><path d="M1 1l3 4 3-4z" fill="#1b78c2" /></svg></button>
                </span>
              </span>
              <span class="unit">
                <select aria-label="Einheit"><option>MB</option><option>GB</option></select>
                <svg viewBox="0 0 8 6"><path d="M1 1l3 4 3-4z" fill="#1b78c2" /></svg>
              </span>
            </div>
          </div>
        </fieldset>
      </div>
      <footer class="dlg-foot">
        <svg class="help" viewBox="0 0 16 16"><circle cx="8" cy="8" r="8" fill="#2c7fc2" /><path d="M5.500 6c0-3 5-3 5 0 0 2-2.500 2-2.500 4M8 11v2" fill="none" stroke="#fff" stroke-width="1.500" /></svg>
        <a href="#">Anleitung zum Migrieren OS auf SSD/HD</a>
        <button class="btn">&lt; Zurück</button>
        <button class="btn">Weiter &gt;</button>
        <button class="btn btn-wide">Abbrechen</button>
        <svg class="grip" viewBox="0 0 9 9"><path d="M6 0h2v2H6zM6 3h2v2H6zM3 3h2v2H3zM6 6h2v2H6zM3 6h2v2H3zM0 6h2v2H0z" fill="#b0b0b0" /></svg>
      </footer>
    </div>
  </div>
</template>

<style>
body { margin: 0; background: #e8e8e8; }
</style>

<style scoped>
.desktop { position: relative; display: flex; flex-direction: column; min-height: 100vh; background: #e8e8e8; color: #646464; font: 12px/16px "DejaVu Sans Condensed", "Noto Sans", sans-serif; --dark: #6095b5; --light: #66a4ce; --gray: #b2b2b2; --line: #b3b9c0; --panel: #e8e8e8; }
.desktop *, .desktop *::before { box-sizing: border-box; }
.defs { position: absolute; width: 0; height: 0; }
button { font: inherit; color: inherit; background: none; border: 0; padding: 0; margin: 0; white-space: nowrap; }
input, select { font: inherit; color: inherit; margin: 0; }
svg { display: block; flex: none; }

.titlebar { display: flex; align-items: center; height: 35px; padding: 0 1px 1px 3px; background: #303030; border-bottom: 1px solid #151515; color: #f0f0f0; }
.app-icon { width: 21px; height: 22px; }
.app-title { flex: 1; padding-left: 4px; }
.win-btn { display: flex; align-items: center; justify-content: center; width: 28px; height: 28px; }
.win-btn svg { width: 14px; height: 14px; }

.menubar { display: flex; align-items: center; height: 30px; padding: 0 7px 0 9px; gap: 20px; background: #d8d8d8; border-bottom: 1px solid #c4c4c4; }
.menu { padding-top: 2px; }
.logo { display: flex; margin-left: auto; width: 105px; height: 23px; font: italic bold 19px/23px "DejaVu Sans", sans-serif; color: #f4f4f4; }
.logo span { flex: 1; text-align: center; }
.logo-a { background: #e03c3c; }
.logo-b { background: #404040; }

.toolbar { display: flex; height: 78px; border-bottom: 1px solid #c6c6c6; }
.tools { display: flex; gap: 11px; border-right: 1px solid #c4c4c4; }
.tools-off { padding: 0 10px 0 6px; }
.tools-main { flex: 1; gap: 13px; padding-left: 13px; }
.tools-media { padding: 0 10px 0 13px; }
.tools-help { padding: 0 7px 0 12px; border-right: 0; }
.tool { display: flex; flex-direction: column; align-items: center; gap: 6px; padding-top: 10px; }
.tool.off { color: #9a9a9a; }
.tool-icon { width: 36px; height: 36px; }

.workspace { display: flex; flex: 1; }
.sidebar { width: 303px; flex: none; padding-top: 7px; border-right: 1px solid #c4c4c4; }
.side-head { display: flex; align-items: center; justify-content: space-between; height: 24px; margin: 0; padding: 0 4px 0 8px; font-size: 12px; color: #505050; }
.chev { width: 14px; height: 14px; }
.side-item { display: flex; align-items: center; height: 26px; padding-left: 11px; gap: 7px; }
.side-icon { width: 16px; height: 16px; }
.pending { margin: 9px 0 0 8px; font-weight: bold; color: #505050; }

.main { flex: 1; min-width: 0; display: flex; flex-direction: column; }
.list { display: flex; height: 572px; border-bottom: 1px solid #c4c8cc; }
.grid { flex: 1; width: 100%; align-self: flex-start; table-layout: fixed; border-collapse: separate; border-spacing: 0; }
.c-gap { width: 23px; } .c-name { width: 257px; } .c-num { width: 88px; } .c-free { width: 86px; } .c-fs { width: 168px; } .c-type { width: 254px; }
.grid th, .grid td { padding: 2px 2px 0 1px; font-weight: normal; text-align: left; white-space: nowrap; overflow: hidden; }
.grid thead th { height: 29px; padding-top: 1px; border-right: 1px solid #c8c8c8; border-bottom: 1px solid #c4c4c4; }
.grid .num { text-align: right; }
.grid .mid { text-align: center; }
.grid thead .num { padding-right: 15px; }
.grid thead .mid { padding-right: 16px; }
.grid .row td { height: 28px; }
.grid .row .name { padding-left: 10px; }
.grid .group th { height: 36px; background: linear-gradient(90deg, #62667a 30%, #e8e8e8 98%) left bottom / 100% 1px no-repeat; }
.grid .group.selected th { background-color: #919191; color: #6a6a6a; }
.group-line { display: flex; align-items: center; gap: 7px; }
.group-line b { color: #505050; }
.group-icon { width: 23px; height: 22px; }
.swatch { display: inline-block; width: 9px; height: 9px; border: 1px solid #555; }
.type-dot { margin: 0 6px 0 1px; background: #5f9fcc; }
.scroll { display: flex; flex-direction: column; align-items: center; width: 13px; flex: none; padding-right: 1px; }
.scroll-arrow { width: 12px; height: 14px; }
.thumb { flex: 1; width: 12px; background: #cbcbcb; }

.maps { display: flex; flex-direction: column; gap: 8px; padding: 4px 3px 7px 1px; }
.disk { display: flex; align-items: center; height: 63px; border: 1px solid var(--line); border-radius: 4px; padding: 4px 2px 4px 2px; background: var(--panel); }
.disk.selected { background: #e0cd86; border-color: #cdb066; border-width: 2px; padding: 3px 1px; }
.disk-icon { width: 31px; height: 26px; }
.disk-text { display: flex; flex-direction: column; width: 102px; padding-left: 5px; }
.disk-text b { color: #555; }
.parts { display: flex; flex: 1; gap: 2px; height: 53px; min-width: 0; }
.part { flex: 1 1 0; min-width: 0; border: 1px solid var(--line); border-radius: 4px; padding-top: 5px; background: var(--panel); }
.bar { height: 11px; margin: 0 6px 3px; background: var(--light); }
.bar.free { background: var(--gray); }
.used { height: 100%; background: var(--dark); }
.part-text { display: flex; flex-direction: column; margin: 0 3px; white-space: nowrap; }

.legend { display: flex; align-items: flex-start; height: 40px; padding: 3px 5px 0 15px; gap: 17px; border-top: 1px solid #c8c8c8; color: #555; }
.legend-item { display: flex; align-items: center; gap: 2px; height: 16px; }
.social { display: flex; gap: 4px; margin-left: auto; }
.social svg { width: 18px; height: 18px; }

.taskbar { display: flex; align-items: center; height: 38px; background: #282828; color: #f0f0f0; }
.sys { display: flex; align-items: center; justify-content: center; width: 45px; height: 38px; }
.sys svg { width: 18px; height: 18px; }
.apps { display: flex; width: 558px; height: 38px; margin-left: 2px; }
.app { flex: 1; display: flex; align-items: center; justify-content: center; border-top: 2px solid transparent; border-bottom: 2px solid transparent; }
.app svg { width: 24px; height: 24px; }
.app.open { border-bottom-color: #76b9ed; }
.app.active { background: #505050; border-top-color: #505050; }
.cursor { width: 12px; height: 18px; margin-left: auto; margin-right: 10px; }
.tray { display: flex; gap: 5px; }
.tray svg { width: 18px; height: 18px; }
.clock { display: flex; flex-direction: column; align-items: center; width: 70px; font: 11px/18px "Noto Sans", sans-serif; }
.notify { width: 34px; display: flex; justify-content: center; }
.notify svg { width: 18px; height: 18px; }
.peek { width: 1px; height: 38px; margin: 0 4px 0 8px; background: #555; }

.dialog { position: absolute; left: 630px; top: 240px; width: 730px; display: flex; flex-direction: column; background: #f8f8f8; border: 1px solid #1c2040; box-shadow: 0 0 4px rgba(40, 40, 100, .6); color: #444; --dark: #337bab; --light: #3d98d3; --gray: #a9a9a9; --line: #b6bfc8; --panel: #f0f0f0; }
.dlg-bar { display: flex; align-items: center; height: 35px; padding-left: 4px; background: #303030; color: #f0f0f0; }
.dlg-icon { width: 20px; height: 22px; }
.dlg-title { flex: 1; padding-left: 5px; }
.dlg-head { height: 58px; padding: 8px 17px 0; background: #fff; border-bottom: 1px solid #c8c8c8; }
.dlg-head h1 { margin: 0; font-size: 12px; line-height: 17px; color: #222; }
.dlg-head p { margin: 0 0 0 17px; }
.dlg-body { display: flex; flex-direction: column; gap: 7px; padding: 13px 18px 10px; }
.box { margin: 0; min-width: 0; border: 1px solid #cfcfcf; border-radius: 4px; padding: 0 5px; }
.box legend { padding: 0 3px; margin-left: 7px; color: #111; }
.options { height: 130px; padding-top: 26px; }
.radio { display: flex; align-items: center; gap: 6px; height: 16px; margin: 0 16px 25px; }
.radio input { appearance: none; width: 10px; height: 11px; border: 1px solid #5d8aa8; border-radius: 50%; background: #fff; }
.radio input:checked { border-color: #6f7a3c; background: radial-gradient(circle, #2c9a2c 1px, #f4e27c 3px); }
.target { height: 93px; padding: 3px 4px 0 5px; }
.target .disk { border-radius: 3px; }
.target .disk-text b { color: #222; }
.part.active { background: #ecd06c; border-color: #dfa82e; box-shadow: inset 0 0 0 1px #e3b542; }
.resize { height: 176px; padding: 1px 6px 0 4px; }
.slider { display: flex; align-items: center; }
.arrow { width: 18px; height: 18px; border: 1px solid #5b9bc8; border-radius: 50%; background: #eef6fc; }
.chunk { flex: 1; height: 58px; padding-top: 6px; border: 1px solid #c99f3a; border-radius: 3px; background: #dfc76c; color: #222; --dark: #2d6d94; }
.chunk .bar { margin-bottom: 12px; }
.chunk span { padding-left: 9px; }
.fields { display: flex; flex-direction: column; gap: 4px; margin: 15px 0 0 156px; }
.field { display: flex; align-items: center; height: 21px; }
.field label { width: 231px; }
.spin { display: flex; width: 95px; height: 21px; border: 1px solid #c4c4c4; background: #fff; }
.spin input { flex: 1; min-width: 0; padding: 0 2px; border: 0; background: none; }
.steps { display: flex; flex-direction: column; width: 15px; border-left: 1px solid #c4c4c4; }
.steps button { flex: 1; display: flex; align-items: center; justify-content: center; }
.steps button + button { border-top: 1px solid #d4d4d4; }
.steps svg, .unit svg { width: 7px; height: 5px; }
.unit { display: flex; align-items: center; width: 41px; height: 21px; margin-left: 3px; background: #fff; }
.unit select { appearance: none; width: 29px; height: 19px; margin-right: 2px; padding: 0 0 0 3px; border: 0; border-right: 1px solid #b5c2cc; background: none; }
.dlg-foot { display: flex; align-items: flex-start; height: 39px; padding: 8px 8px 6px 9px; gap: 5px; border-top: 1px solid #c8c8c8; position: relative; }
.help { width: 16px; height: 16px; align-self: flex-end; }
.dlg-foot a { margin-right: auto; align-self: flex-end; color: #3f8edb; }
.btn { width: 70px; height: 22px; border: 1px solid #c6c6c6; border-radius: 2px; background: #dedede; }
.btn-wide { width: 73px; }
.grip { position: absolute; right: 1px; bottom: 1px; width: 9px; height: 9px; }
</style>
